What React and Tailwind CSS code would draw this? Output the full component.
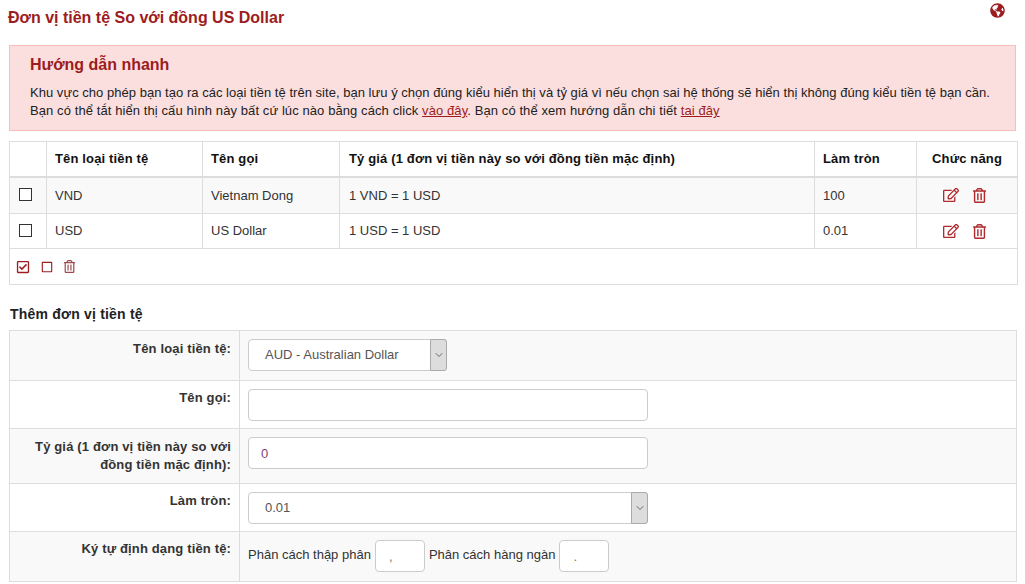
import { FaGlobeAmericas, FaRegEdit, FaRegTrashAlt, FaRegCheckSquare, FaRegSquare } from 'react-icons/fa'
import { ChevronDown } from 'lucide-react'

const currencies = [
  { code: 'VND', name: 'Vietnam Dong', rate: '1 VND = 1 USD', round: '100', bg: 'bg-[#f9f9f9]', h: 'h-[37px]' },
  { code: 'USD', name: 'US Dollar', rate: '1 USD = 1 USD', round: '0.01', bg: 'bg-white', h: 'h-[35px]' },
]

const th = 'border border-[#dddddd] border-b-2 px-[8px] font-bold text-[13px] tracking-[0.15px] text-[#111]'
const td = 'border border-[#dddddd] px-[8px] text-[13px] text-[#333]'
const labelCell = 'border border-[#dddddd] px-[8px] align-top text-right font-bold text-[13px] tracking-[0.15px] leading-[18px] text-[#333]'
const fieldCell = 'border border-[#dddddd] px-[8px] pt-[8px] align-top text-[13px] text-[#333]'
const inputCls = 'block h-[32px] rounded-[4px] border border-[#cccccc] bg-white text-[13px] outline-none'

const FakeSelect = ({ value, className }) => (
  <div className={`flex h-[32px] items-stretch rounded-[4px] border border-[#cccccc] bg-white ${className}`}>
    <span className="flex-1 pl-[16px] text-[13px] leading-[30px] text-[#555]">{value}</span>
    <span className="-my-px -mr-px flex w-[17px] items-center justify-center rounded-r-[3px] border border-[#aaaaaa] bg-[#dddddd]">
      <ChevronDown size={12} strokeWidth={1.5} className="text-[#444]" />
    </span>
  </div>
)

const App = () => {
  return (
    <div className="h-[584px] w-[1025px] overflow-hidden bg-white px-[9px] font-['Liberation_Sans',Arial,sans-serif]">
      <div className="-ml-[1px] flex h-[45px] items-start justify-between pr-[11px]">
        <h1 className="pt-[9px] text-[16px] font-bold leading-[18px] text-[#9c1c20]">Đơn vị tiền tệ So với đồng US Dollar</h1>
        <FaGlobeAmericas size={15} className="mt-[3px] text-[#9c1c20]" />
      </div>

      <div className="h-[86px] border border-[#fbbcbc] bg-[#fbdfdf] px-[20px] pt-[9px]">
        <h2 className="text-[16px] font-bold leading-[20px] text-[#9c1c20]">Hướng dẫn nhanh</h2>
        <p className="mt-[9px] text-[13px] leading-[18px] text-[#222]">
          <span className="tracking-[0.03px]">Khu vực cho phép bạn tạo ra các loại tiền tệ trên site, bạn lưu ý chọn đúng kiểu hiển thị và tỷ giá vì nếu chọn sai hệ thống sẽ hiển thị không đúng kiểu tiền tệ bạn cần.</span>
          <br />
          <span className="tracking-[0.09px]">Bạn có thể tắt hiển thị cấu hình này bất cứ lúc nào bằng cách click <a className="text-[#9c1c20] underline">vào đây</a>. Bạn có thể xem hướng dẫn chi tiết <a className="text-[#9c1c20] underline">tai đây</a></span>
        </p>
      </div>

      <table className="mt-[10px] w-[1008px] table-fixed border-collapse">
        <colgroup>
          <col className="w-[37px]" />
          <col className="w-[156px]" />
          <col className="w-[137px]" />
          <col className="w-[475px]" />
          <col className="w-[102px]" />
          <col className="w-[101px]" />
        </colgroup>
        <thead>
          <tr className="h-[35px]">
            <th className={`${th} text-left`}></th>
            <th className={`${th} text-left`}>Tên loại tiền tệ</th>
            <th className={`${th} text-left`}>Tên gọi</th>
            <th className={`${th} pl-[9px] text-left`}>Tỷ giá (1 đơn vị tiền này so với đồng tiền mặc định)</th>
            <th className={`${th} text-left`}>Làm tròn</th>
            <th className={`${th} text-center`}>Chức năng</th>
          </tr>
        </thead>
        <tbody>
          {currencies.map((c) => (
            <tr key={c.code} className={`${c.h} ${c.bg}`}>
              <td className={`${td} pl-[9px]`}>
                <span className="-mt-[2px] block h-[13px] w-[13px] border border-[#333] bg-white"></span>
              </td>
              <td className={td}>{c.code}</td>
              <td className={td}>{c.name}</td>
              <td className={`${td} pl-[9px]`}>{c.rate}</td>
              <td className={td}>{c.round}</td>
              <td className={td}>
                <div className="flex items-center justify-center gap-[13px] pr-[5px] text-[#b02a2e]">
                  <FaRegEdit size={16} />
                  <FaRegTrashAlt size={15} />
                </div>
              </td>
            </tr>
          ))}
          <tr className="h-[36px]">
            <td colSpan={6} className="border border-[#dddddd] px-[7px]">
              <div className="flex items-center gap-[11px] text-[#9c1c20]">
                <FaRegCheckSquare size={14} className="-ml-px" />
                <FaRegSquare size={12} />
                <FaRegTrashAlt size={13} className="-ml-px text-[#9c4c50]" />
              </div>
            </td>
          </tr>
        </tbody>
      </table>

      <h3 className="mt-[21px] pl-px text-[14px] font-bold leading-[16px] tracking-[0.2px] text-[#222]">Thêm đơn vị tiền tệ</h3>

      <table className="mt-[8px] w-[1008px] table-fixed border-collapse">
        <colgroup>
          <col className="w-[230px]" />
          <col />
        </colgroup>
        <tbody>
          <tr className="h-[50px] bg-[#f9f9f9]">
            <td className={`${labelCell} pt-[9px]`}>Tên loại tiền tệ:</td>
            <td className={fieldCell}>
              <FakeSelect value="AUD - Australian Dollar" className="w-[199px]" />
            </td>
          </tr>
          <tr className="h-[48px]">
            <td className={`${labelCell} pt-[8px]`}>Tên gọi:</td>
            <td className={`${fieldCell} pt-[7px]`}>
              <input className={`${inputCls} w-[400px] px-[12px] text-[#555]`} defaultValue="" />
            </td>
          </tr>
          <tr className="h-[55px] bg-[#f9f9f9]">
            <td className={`${labelCell} pt-[9px]`}>Tỷ giá (1 đơn vị tiền này so với đồng tiền mặc định):</td>
            <td className={fieldCell}>
              <input className={`${inputCls} w-[400px] px-[12px] text-[#7a3f7a]`} defaultValue="0" />
            </td>
          </tr>
          <tr className="h-[48px]">
            <td className={`${labelCell} pt-[8px]`}>Làm tròn:</td>
            <td className={fieldCell}>
              <FakeSelect value="0.01" className="w-[400px]" />
            </td>
          </tr>
          <tr className="h-[50px] bg-[#f9f9f9]">
            <td className={`${labelCell} pt-[8px]`}>Ký tự định dạng tiền tệ:</td>
            <td className={fieldCell}>
              <div className="flex items-center gap-[4px]">
                <span className="pb-[3px]">Phân cách thập phân</span>
                <input className={`${inputCls} w-[50px] pl-[13px] text-[#777]`} defaultValue="," />
                <span className="pb-[3px]">Phân cách hàng ngàn</span>
                <input className={`${inputCls} w-[50px] pl-[13px] text-[#777]`} defaultValue="." />
              </div>
            </td>
          </tr>
        </tbody>
      </table>
    </div>
  )
}

export default App
